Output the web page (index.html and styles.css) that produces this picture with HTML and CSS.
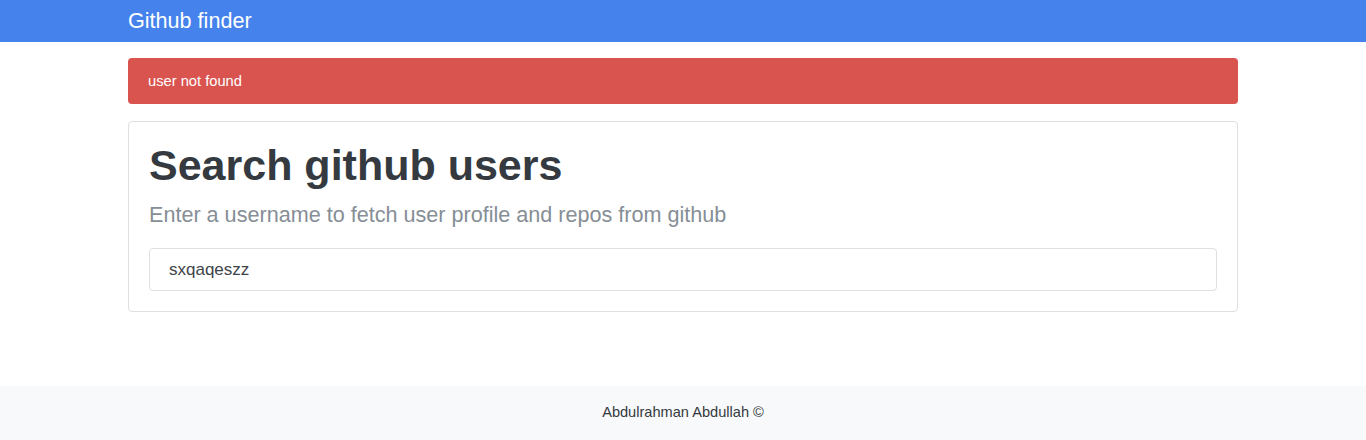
FILE: index.html
```html
<!DOCTYPE html>
<html lang="en">
<head>
<meta charset="utf-8">
<title>Github finder</title>
<link rel="stylesheet" href="styles.css">
</head>
<body>
<nav class="navbar">
  <div class="container">
    <a class="brand" href="#">Github finder</a>
  </div>
</nav>
<main class="container main">
  <div class="alert">user not found</div>
  <div class="card">
    <h1 class="title">Search github users</h1>
    <p class="lead">Enter a username to fetch user profile and repos from github</p>
    <input class="search" type="text" value="sxqaqeszz">
  </div>
</main>
<footer class="footer">Abdulrahman Abdullah &copy;</footer>
</body>
</html>
```

FILE: styles.css
```css
* { box-sizing: border-box; }
html, body { margin: 0; padding: 0; }
body {
  font-family: "Liberation Sans", Arial, sans-serif;
  font-size: 14.6px;
  line-height: 1.5;
  color: #343a40;
  background: #fff;
}
.container {
  width: 1110px;
  margin: 0 auto;
}
.navbar {
  background: #4582ec;
  height: 42px;
}
.navbar .container {
  display: flex;
  align-items: center;
  height: 42px;
}
.brand {
  color: #fff;
  text-decoration: none;
  font-size: 21.6px;
  line-height: 1;
}
.main {
  padding-top: 16px;
  padding-bottom: 74px;
}
.alert {
  background: #d9534f;
  color: #fff;
  border-radius: 4px;
  padding: 12px 20px;
  height: 46px;
  font-size: 14.7px;
  line-height: 22px;
  margin-bottom: 17px;
}
.card {
  border: 1px solid #dfdfdf;
  border-radius: 4px;
  padding: 20px;
}
.title {
  margin: 0 0 10px;
  font-size: 43px;
  line-height: 47px;
  font-weight: 700;
  color: #343a40;
}
.lead {
  margin: 0 0 17px;
  font-size: 21.6px;
  line-height: 32px;
  color: #868e96;
}
.search {
  display: block;
  width: 100%;
  height: 43px;
  padding: 0 19px;
  border: 1px solid #e0e0e0;
  border-radius: 4px;
  font-family: "Liberation Sans", Arial, sans-serif;
  font-size: 17px;
  color: #3d4349;
  background: #fff;
  outline: none;
}
.footer {
  background: #f8f9fa;
  height: 54px;
  display: flex;
  align-items: center;
  justify-content: center;
  font-size: 14.6px;
  color: #343a40;
}
```
